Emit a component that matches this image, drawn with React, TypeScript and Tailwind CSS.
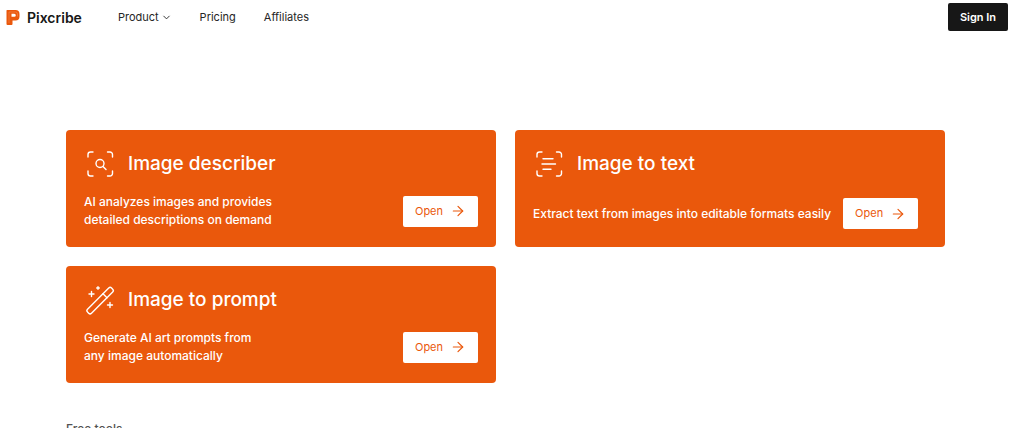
import type { ReactNode } from "react";
import { ArrowRight, ChevronDown } from "lucide-react";

const iconProps = {
  viewBox: "0 0 32 32",
  fill: "none",
  stroke: "currentColor",
  strokeWidth: 1.4,
  strokeLinecap: "round" as const,
  strokeLinejoin: "round" as const,
  "aria-hidden": true,
  className: "size-8 shrink-0",
};

const corners = "M4 9V6.500A2.500 2.500 0 0 1 6.500 4H9M23.500 4H26a2.500 2.500 0 0 1 2.500 2.500V9M28.500 23v2.500A2.500 2.500 0 0 1 26 28h-2.500M9 28H6.500A2.500 2.500 0 0 1 4 25.500V23";

function ScanSearchIcon() {
  return (
    <svg {...iconProps}>
      <path d={corners} />
      <circle cx="16" cy="15.500" r="4" />
      <path d="m19 18.500 3 3" />
    </svg>
  );
}

function ScanTextIcon() {
  return (
    <svg {...iconProps}>
      <path d={corners} />
      <path d="M10 10.800h10M9 16h13.500M10 21.200h8" />
    </svg>
  );
}

function WandIcon() {
  return (
    <svg {...iconProps}>
      <rect x="-2" y="-2.800" width="34" height="5.600" rx="2" transform="translate(5.500 27.200) rotate(-45)" />
      <path d="m19 9.700 4 4" />
      <path d="M7.500 7.500v5M5 10h5M26 18.500v5M23.500 21h5M14 2.700v2.600M12.700 4h2.600" />
    </svg>
  );
}

function Logo() {
  return (
    <svg viewBox="0 0 14 17" aria-hidden="true" className="h-[17px] w-3.5">
      <path
        fillRule="evenodd"
        fill="#ea580c"
        d="M1 1h8.500A4 4 0 0 1 13.500 5v2.500a4 4 0 0 1-4 4H6.500V15a1 1 0 0 1-1 1H1.500a1 1 0 0 1-1-1V1.500A.5.5 0 0 1 1 1ZM5.500 4.800v3h2.800a1.500 1.500 0 0 0 0-3Z"
      />
      <path d="M3 3v11M3 3h6.500a2 2 0 0 1 2 2v2.500" fill="none" stroke="#f58a50" strokeWidth=".6" />
    </svg>
  );
}

type CardProps = { icon: ReactNode; title: string; children: ReactNode; compact?: boolean };

function ToolCard({ icon, title, children, compact }: CardProps) {
  return (
    <article className="flex min-h-[117px] flex-col justify-between rounded bg-[#ea580c] px-[18px] py-[18px] text-white">
      <div className="flex items-center gap-3">
        {icon}
        <h2 className="text-[19px] leading-8 font-medium">{title}</h2>
      </div>
      <div className={compact ? "flex items-center gap-3" : "flex items-center justify-between"}>
        <p className="text-[12px] leading-[18px] font-medium">{children}</p>
        <a
          href="#"
          className="flex h-[31px] w-[75px] shrink-0 items-center justify-center gap-[7px] rounded-xs bg-white text-[11px] text-[#ea580c]"
        >
          Open
          <ArrowRight size={16} strokeWidth={1.8} aria-hidden="true" />
        </a>
      </div>
    </article>
  );
}

export default function App() {
  return (
    <div className="h-screen overflow-hidden bg-white font-['Inter',sans-serif] text-neutral-900">
      <header className="flex items-center justify-between py-[3px] pr-4 pl-1.5">
        <div className="flex items-center gap-9">
          <a href="#" className="flex items-center gap-[7px] text-[14px] font-semibold">
            <Logo />
            Pixcribe
          </a>
          <nav className="flex items-center gap-7 text-[11px] text-neutral-800">
            <button type="button" className="flex items-center gap-0.5">
              Product
              <ChevronDown size={11} strokeWidth={2} aria-hidden="true" />
            </button>
            <a href="#">Pricing</a>
            <a href="#">Affiliates</a>
          </nav>
        </div>
        <button type="button" className="h-7 w-[60px] rounded-xs bg-neutral-900 text-[11px] font-semibold text-white">
          Sign In
        </button>
      </header>
      <main className="pt-24 pr-[79px] pl-[66px]">
        <section className="grid grid-cols-2 gap-[19px]">
          <ToolCard icon={<ScanSearchIcon />} title="Image describer">
            AI analyzes images and provides
            <br />
            detailed descriptions on demand
          </ToolCard>
          <ToolCard icon={<ScanTextIcon />} title="Image to text" compact>
            Extract text from images into editable formats easily
          </ToolCard>
          <ToolCard icon={<WandIcon />} title="Image to prompt">
            Generate AI art prompts from
            <br />
            any image automatically
          </ToolCard>
        </section>
        <h3 className="mt-[38px] text-[12px] leading-4 font-medium text-neutral-600">Free tools</h3>
      </main>
    </div>
  );
}
